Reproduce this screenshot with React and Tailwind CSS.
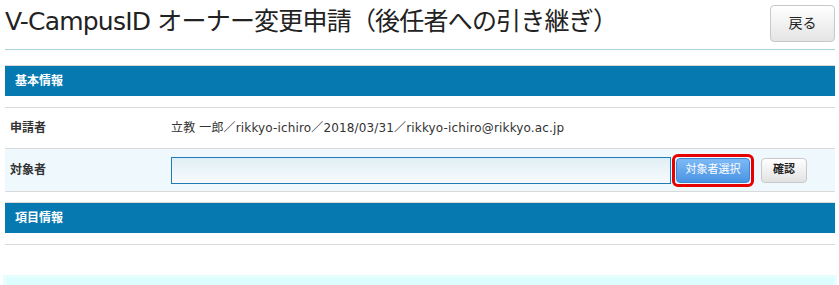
const FONT = "font-['DejaVu_Sans','Noto_Sans_CJK_JP',sans-serif]";

function SectionBar({ title }) {
  return (
    <div className="border-t border-[#d9d9d9]">
      <div className="h-[30px] bg-[#0679b1] flex items-center pl-[10px]">
        <span className="text-[12px] font-bold text-white">{title}</span>
      </div>
    </div>
  );
}

export default function App() {
  return (
    <div className={`w-[839px] h-[285px] overflow-hidden bg-white text-[#333] ${FONT}`}>
      <div className="ml-[5px] w-[830px]">
        {/* page heading */}
        <div className="h-[50px] flex items-start justify-between border-b border-[#a8d3dc]">
          <h1 className="text-[25px] leading-[30px] pt-[7px] text-[#222] tracking-[-0.8px]">
            V-CampusID オーナー変更申請（後任者への引き継ぎ）
          </h1>
          <button className="mt-[5px] w-[65px] h-[37px] rounded-[4px] border border-[#c8c8c8] bg-gradient-to-b from-white to-[#e4e4e4] text-[14px] text-[#222]">
            戻る
          </button>
        </div>

        {/* basic info */}
        <div className="mt-[15px]">
          <SectionBar title="基本情報" />
          <div className="mt-[11px] border-t border-[#d9d9d9]">
            <div className="h-[41px] flex items-center border-b border-[#d9d9d9]">
              <div className="w-[166px] pl-[5px] text-[12px] font-bold">申請者</div>
              <div className="text-[12px] tracking-[0.15px] text-[#333]">
                立教 一郎／rikkyo-ichiro／2018/03/31／rikkyo-ichiro@rikkyo.ac.jp
              </div>
            </div>
            <div className="h-[43px] flex items-center bg-[#eef8fd] border-b border-[#d9d9d9]">
              <div className="w-[166px] pl-[5px] text-[12px] font-bold">対象者</div>
              <input
                type="text"
                className="w-[500px] h-[27px] border border-[#1f7db5] bg-gradient-to-b from-[#dfeef5] to-[#f8fbfc] outline-none"
              />
              <div className="ml-[1px] rounded-[6px] border-[3px] border-[#e60000] p-[1px]">
                <button className="block w-[74px] h-[25px] rounded-[4px] border border-[#3e86d6] bg-gradient-to-b from-[#7cbaf5] to-[#4b93e4] text-[11px] text-white">
                  対象者選択
                </button>
              </div>
              <button className="ml-[7px] w-[46px] h-[25px] rounded-[4px] border border-[#c8c8c8] bg-gradient-to-b from-white to-[#e2e2e2] text-[11px] font-bold text-[#222]">
                確認
              </button>
            </div>
          </div>
        </div>

        {/* item info */}
        <div className="mt-[10px]">
          <SectionBar title="項目情報" />
          <div className="mt-[11px] border-t border-[#d9d9d9]" />
        </div>
      </div>

      {/* notice box */}
      <div className="mt-[30px] ml-[3px] w-[834px] h-[20px] bg-[#e6fefe] pt-[3px] px-[4px]">
        <div className="h-full bg-[#dcfdfd]" />
      </div>
    </div>
  );
}
